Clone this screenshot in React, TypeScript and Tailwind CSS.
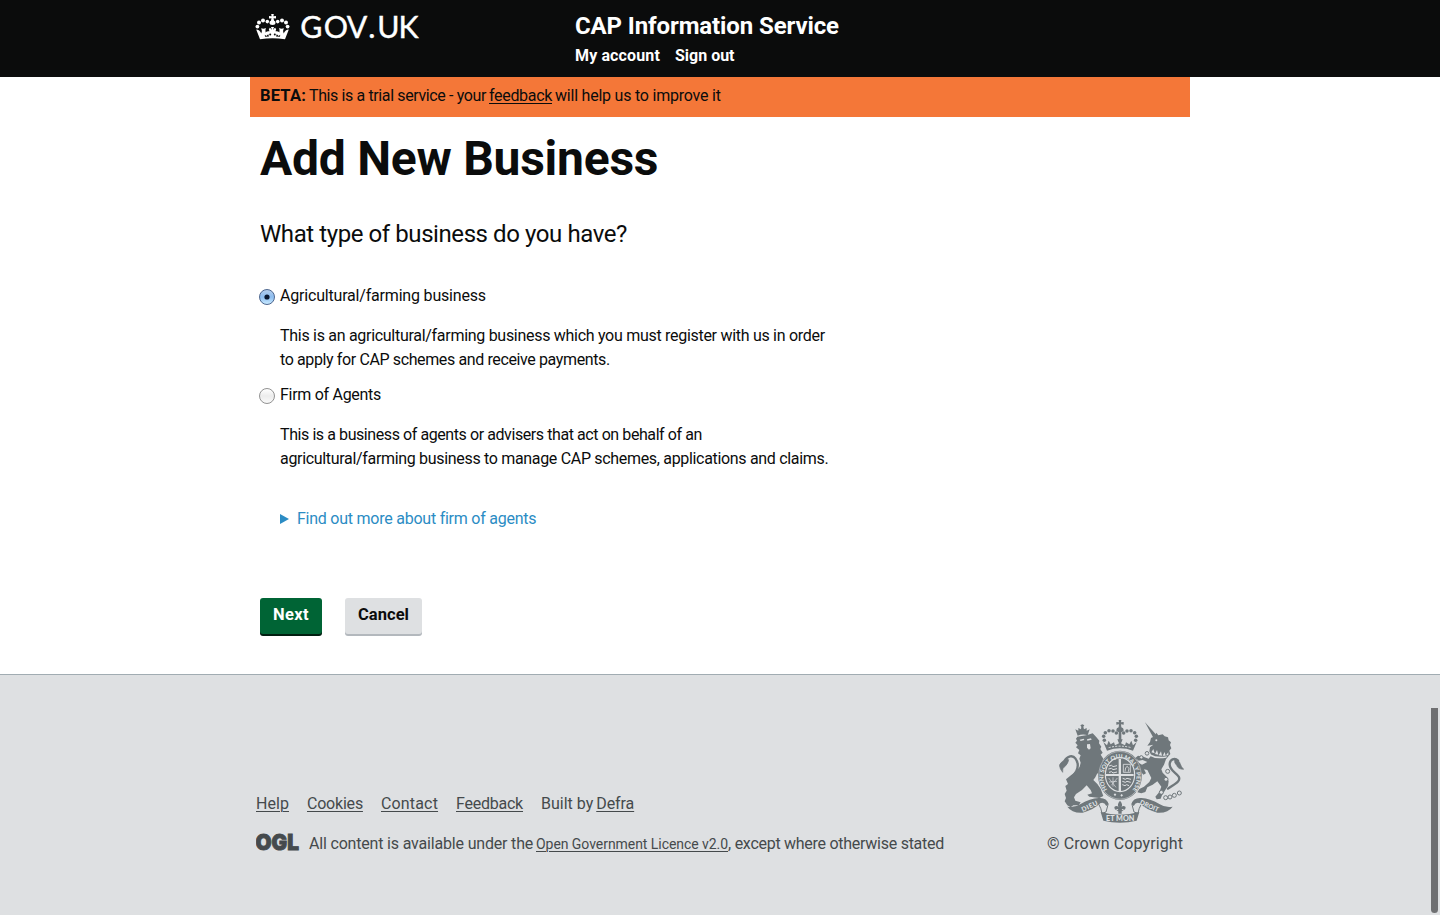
import React from 'react';

function Crown() {
  const dots = [
    [2.4, 12.6, 1.9], [4, 8.6, 2], [8, 6.4, 2], [12.3, 7.6, 1.8],
    [32.6, 12.6, 1.9], [31, 8.6, 2], [27, 6.4, 2], [22.7, 7.6, 1.8],
  ];
  return (
    <g fill="#fff">
      <path d="M16.200 0h2.600l-.4 2.300 2.600-.4v2.700l-2.500-.4.6 2.600c.9.400 1.400 1.100 1.400 2 0 1.300-1 2.300-3 2.300s-3-1-3-2.300c0-.9.5-1.600 1.400-2l.6-2.600-2.500.4V1.900l2.600.4z" />
      {dots.map(([x, y, r]) => (
        <circle key={`${x}-${y}`} cx={x} cy={y} r={r} />
      ))}
      <path d="M5 25.200L1.200 15.600Q4.600 15.600 6.300 19.400Q7.600 17.300 6.200 14.300Q8.600 15.300 10.900 14Q10 16.500 10.600 18.600Q12 16.700 14.500 17.300Q13.100 15.300 14.700 13.800Q16.100 14.200 16.700 15.900Q16.900 14.500 15.900 12.900H19.100Q18.100 14.500 18.300 15.900Q18.900 14.200 20.300 13.800Q21.900 15.300 20.500 17.300Q23 16.700 24.400 18.600Q25 16.500 24.100 14Q26.400 15.300 28.800 14.300Q27.400 17.300 28.700 19.400Q30.400 15.600 33.800 15.600L30 25.200Q17.500 23.300 5 25.200z" />
      <g fill="#0b0c0c">
        <path d="M9.800 20.800l1.500 1.300 1.900-1.900.8 2.200-4 .3zM25.200 20.800l-1.500 1.300-1.900-1.900-.8 2.200 4 .3z" />
        <circle cx="15.200" cy="20.600" r="1" />
        <circle cx="19.800" cy="20.600" r="1" />
      </g>
    </g>
  );
}

function GovUkLogo() {
  return (
    <svg width="180" height="36" viewBox="0 0 180 36" className="block" aria-label="GOV.UK">
      <Crown />
      <text x="45.300 68.700 91.700 113.200 122.200 143.600" y="23.600" fill="#fff" fontFamily="Lato, sans-serif" fontSize="30.300" stroke="#fff" strokeWidth=".4">
        GOV.UK
      </text>
    </svg>
  );
}

function CoatOfArms() {
  const pearls = [
    [383, 184], [378, 208], [364, 247], [377, 263], [390, 261], [403, 256], [418, 249],
  ];
  const arch = [
    [193, 91], [191, 79], [196, 68], [207, 62], [219, 63], [229, 69],
    [287, 91], [289, 79], [284, 68], [273, 62], [261, 63], [251, 69],
  ];
  return (
    <svg width="125" height="103" viewBox="57 30 375 309" className="block" role="img" aria-label="Royal coat of arms">
      <g fill="#6f777b">
        {/* lion */}
        <path d="M113 77L106 58L115 62L115 54L123 58L124 50L121 46L127 43L133 46L130 50L132 58L140 54L140 62L149 58L143 76Q128 71 113 77z" />
        <path d="M112 80L142 75L158 70L168 80L178 92L177 100L184 110L181 117L188 128L182 134L190 146L187 152L196 168L210 172L216 184L204 186L200 194L190 190L182 196L172 190L166 202L160 210L172 222L182 236L190 258L178 264L148 260L142 254L156 250L152 240L140 226L126 240L108 252L102 262L106 272L122 277L116 286L100 286L92 292L82 286L74 274L78 264L74 252L80 242L76 228L84 222L78 208L90 198L110 182L119 170L122 158L118 146L122 136L114 130L118 120L108 112L113 106L106 98L111 92L108 86z" />
        <path d="M186 178Q204 190 214 206L206 214L188 204z" />
        <path d="M315 37L350 76L340 83z" />
        {/* unicorn */}
        <path d="M322 107L330 96L333 84L345 78L349 68L355 76L368 73L374 79L384 82L386 91L393 97L390 105L394 115L388 122L391 132L384 140L378 148L372 164L364 178L368 188L380 200L386 214L384 228L376 240L366 256L362 266L350 268L346 260L358 246L364 230L352 214L338 224L322 232L316 246L304 250L292 247L298 237L312 230L328 216L334 204L328 192L322 180L312 178L318 190L310 194L302 184L298 172L288 166L284 156L296 158L306 164L322 156L308 150L296 152L286 144L294 137L310 140L326 146L334 136L328 124L330 112L340 104L332 106z" />
        {/* crown */}
        <path d="M236 30h8l-1 7 8-1v8l-8-1 1 9q7 2 7 8t-11 6q-11 0-11-6t7-8l1-9-8 1v-8l8 1z" />
        {arch.map(([x, y]) => (
          <circle key={`${x}-${y}`} cx={x} cy={y} r="5.300" />
        ))}
        <path d="M201 122L190 96L201 106L206 92L212 103L222 97L225 106L237 100L232 88L248 88L243 100L255 106L258 97L268 103L274 92L279 106L290 96L279 122Q240 108 201 122z" />
        <path d="M236 65h8v30h-8z" />
        {/* garter */}
        <ellipse cx="240" cy="196" rx="66" ry="74" />
      </g>
      {/* tails */}
      <g fill="none" stroke="#6f777b" strokeLinecap="round">
        <path d="M86 210C100 200 126 172 106 145C98 134 82 138 74 152" strokeWidth="7" />
        <path d="M82 146Q62 154 58 166Q60 178 68 187Q66 174 74 170Q84 162 86 150z" fill="#6f777b" strokeWidth="2" />
        <path d="M384 236C404 222 424 214 416 200C408 188 390 182 389 164C389 148 404 142 414 152" strokeWidth="7" />
        <path d="M404 149Q418 150 420 160Q424 172 431 178Q414 178 410 166Q402 160 404 149z" fill="#6f777b" strokeWidth="2" />
      </g>
      <g fill="none" stroke="#dee0e2">
        <ellipse cx="240" cy="196" rx="63.500" ry="71.500" strokeWidth="1.500" />
        <ellipse cx="240" cy="194" rx="44" ry="51" strokeWidth="3.500" />
        <path d="M206 113q34-9 68 0" strokeWidth="3" strokeDasharray="6 4" />
      </g>
      <g fill="#dee0e2">
        <path d="M236 146h7v46h38v6h-38v45h-7v-45h-38v-6h38z" />
        <g stroke="#dee0e2" strokeWidth="3" fill="none">
          <path d="M207 168l8-2 4 4 12-3M205 177l10-2 4 4 12-3M207 187l8-2 4 4 12-3M248 205l8 3 5-3 12 3M247 214l9 3 5-3 11 3M247 224l8 3 5-3 7 3" />
          <path d="M250 163h21v24h-21zM255 185l2-12 5-4 5 7-2 9" strokeWidth="2.500" />
          <path d="M206 204l22 28M219 202v28M232 204l-18 22M231 214l-24 2" strokeWidth="2" />
        </g>
        <path id="garter-line" d="M202 239A49.500 57.500 0 1 1 278 239" fill="none" />
        <text fontFamily="Lato, sans-serif" fontWeight="900" fontSize="17">
          <textPath href="#garter-line" textLength="248" lengthAdjust="spacingAndGlyphs">HONI SOIT QUI MAL Y PENSE</textPath>
        </text>
        {/* faces and collar */}
        <path d="M119 89l12-3 2 4-11 3zM141 88l12-3 2 4-13 3zM141 103l9-1 2 13-5 4-6-6z" />
        <circle cx="349" cy="91" r="3" />
        <path d="M334 127l6-10 4 13zM345 132l6-12 4 14zM356 136l7-12 3 13zM368 137l6-11 3 11zM378 136l7-9 0 9z" />
        <path d="M331 133Q350 144 381 139L379 143Q348 149 329 137z" />
        <path d="M221 254l4-4 4 4-4 4zM241 256l4-4 4 4-4 4z" />
      </g>
      <g fill="#dee0e2" stroke="#6f777b" strokeWidth="3">
        {pearls.map(([x, y]) => (
          <circle key={`${x}-${y}`} cx={x} cy={y} r="6" />
        ))}
        <circle cx="321" cy="130" r="5.500" />
        <circle cx="304" cy="142" r="5" />
      </g>
      {/* motto ribbon */}
      <path d="M186 270Q200 268 204 284L198 306L186 310Q184 296 176 282zM294 270Q280 268 276 284L282 306L294 310Q296 296 304 282z" fill="#dee0e2" stroke="#6f777b" strokeWidth="3" />
      <g fill="#6f777b">
        <path d="M82 290Q104 294 122 282Q150 266 176 264Q200 262 206 282L199 288Q192 274 180 280Q164 298 128 308Q96 310 82 290z" />
        <path d="M398 290Q376 294 358 282Q330 266 304 264Q280 262 274 282L281 288Q288 274 300 280Q316 298 352 308Q384 310 398 290z" />
        <path d="M182 306Q240 322 298 306L290 332Q240 344 190 332z" />
        <path d="M240 272Q250 283 244 292Q250 284 257 291Q257 299 252 300Q248 295 245 299L251 302L245 304V311H235V304L229 302L235 299Q232 295 228 300Q223 299 223 291Q230 284 236 292Q230 283 240 272z" />
      </g>
      <g fill="#dee0e2" fontFamily="Lato, sans-serif" fontWeight="900" fontSize="20">
        <text transform="translate(128 306) rotate(-25)" textLength="52">DIEU</text>
        <text transform="translate(298 282) rotate(24)" textLength="60" lengthAdjust="spacingAndGlyphs">DROIT</text>
        <text x="198" y="332" textLength="85" lengthAdjust="spacingAndGlyphs">ET MON</text>
      </g>
    </svg>
  );
}

function OglLogo() {
  return (
    <svg width="48" height="24" viewBox="0 0 48 24" className="block" aria-label="Open Government Licence">
      <text x="-.5" y="16.600" textLength="43.500" lengthAdjust="spacingAndGlyphs" fontFamily="Inter, sans-serif" fontWeight="900" fontSize="21.500" fill="#454a4d" stroke="#454a4d" strokeWidth=".9">
        OGL
      </text>
    </svg>
  );
}

function Radio({ checked }: { checked?: boolean }) {
  return checked ? (
    <span className="mt-[5px] flex size-4 shrink-0 items-center justify-center rounded-full border border-[#4c668f] bg-linear-to-b from-[#b3cdec] via-[#8dbdf0] to-[#c8eaff]">
      <svg width="14" height="14" viewBox="0 0 14 14">
        <circle cx="7" cy="7" r="2.600" fill="#0a1830" />
      </svg>
    </span>
  ) : (
    <span className="mt-[5px] size-4 shrink-0 rounded-full border border-[#929292] bg-linear-to-b from-white via-[#ececec] to-[#fafafa]" />
  );
}

const link = 'underline decoration-1 underline-offset-2';

export default function App() {
  return (
    <div className="relative flex h-[915px] flex-col overflow-hidden bg-white font-['Roboto',sans-serif] text-base leading-6 whitespace-nowrap text-[#0b0c0c]">
      <header className="h-[77px] shrink-0 bg-[#0b0c0c] text-white">
        <div className="mx-auto flex w-[940px]">
          <div className="w-[325px] pt-3.5 pl-[5px]">
            <GovUkLogo />
          </div>
          <div className="pt-[11px] font-bold">
            <div className="text-2xl leading-[30px] tracking-[-0.11px]">CAP Information Service</div>
            <nav className="mt-1 flex gap-[15px] leading-[22px]">
              <a className="tracking-[0.13px]">My account</a>
              <a>Sign out</a>
            </nav>
          </div>
        </div>
      </header>

      <main className="mx-auto w-[940px] grow">
        <div className="flex h-10 bg-[#f47738] px-2.5 pt-[7px]">
          <strong className="w-[49px] text-[16.5px] tracking-[0.2px]">BETA:</strong>
          <span className="w-[180px] tracking-[-0.38px]">This is a trial service - your</span>
          <a className={`${link} mr-[3px] w-[63px] tracking-[-0.32px]`}>feedback</a>
          <span className="tracking-[-0.22px]">will help us to improve it</span>
        </div>

        <div className="px-2.5">
          <h1 className="mt-[17px] text-5xl leading-[50px] font-bold tracking-[-0.25px]">Add New Business</h1>
          <h2 className="mt-[35px] text-2xl leading-[30px] tracking-[-0.42px]">What type of business do you have?</h2>

          <div className="mt-[35px] -ml-px">
            <label className="flex gap-[5px]">
              <Radio checked />
              <span className="tracking-[-0.19px]">Agricultural/farming business</span>
            </label>
            <p className="mt-4 ml-[21px]">
              <span className="tracking-[-0.29px]">This is an agricultural/farming business which you must register with us in order</span>
              <br />
              <span className="tracking-[-0.38px]">to apply for CAP schemes and receive payments.</span>
            </p>
            <label className="mt-[11px] flex gap-[5px]">
              <Radio />
              <span className="tracking-[-0.29px]">Firm of Agents</span>
            </label>
            <p className="mt-4 ml-[21px]">
              <span className="tracking-[-0.42px]">This is a business of agents or advisers that act on behalf of an</span>
              <br />
              <span className="tracking-[-0.32px]">agricultural/farming business to manage CAP schemes, applications and claims.</span>
            </p>
          </div>

          <div className="mt-9 ml-5 flex items-center gap-2 text-[#2b8cc4]">
            <svg width="9" height="10" viewBox="0 0 9 10">
              <path d="M0 0l9 5-9 5z" fill="currentColor" />
            </svg>
            <span className="tracking-[-0.24px]">Find out more about firm of agents</span>
          </div>

          <div className="mt-[67px] flex gap-[23px] font-bold">
            <button className="h-9 w-[62px] rounded-[3px] bg-[#006435] pb-[3px] text-[16.5px] tracking-[0.35px] text-white shadow-[0_2px_0_#001e10]">Next</button>
            <button className="h-9 w-[77px] rounded-[3px] bg-[#dee0e2] pb-[3px] text-[16.5px] tracking-[0.05px] shadow-[0_2px_0_#b3b8bd]">Cancel</button>
          </div>
        </div>
      </main>

      <footer className="h-[241px] shrink-0 border-t border-[#a1acb2] bg-[#dee0e2] text-[#454a4c]">
        <div className="mx-auto flex w-[928px] justify-between pt-[45px]">
          <div className="pt-[72px]">
            <nav className="flex gap-[18px]">
              <a className={`${link} w-[33px] tracking-[0.05px]`}>Help</a>
              <a className={`${link} w-14 tracking-[-0.21px]`}>Cookies</a>
              <a className={`${link} w-[57px] tracking-[0.16px]`}>Contact</a>
              <a className={`${link} w-[67px] tracking-[-0.23px]`}>Feedback</a>
              <span className="flex gap-[3px]">
                <span>Built by</span>
                <a className={`${link} tracking-[-0.09px]`}>Defra</a>
              </span>
            </nav>
            <div className="mt-4 flex">
              <div className="w-[53px] pt-px">
                <OglLogo />
              </div>
              <span className="w-[227px] tracking-[-0.18px]">All content is available under the</span>
              <a className={`${link} text-sm leading-[25px] tracking-[-0.05px]`}>Open Government Licence v2.0</a>
              <span className="tracking-[-0.27px]">, except where otherwise stated</span>
            </div>
          </div>
          <div className="flex w-[137px] flex-col items-end">
            <CoatOfArms />
            <div className="mt-[9px] mr-px tracking-[0.09px]">© Crown Copyright</div>
          </div>
        </div>
      </footer>

      <div className="absolute top-[708px] right-[2px] h-[205px] w-[7px] rounded-b-full bg-[#6f7072]" />
    </div>
  );
}
